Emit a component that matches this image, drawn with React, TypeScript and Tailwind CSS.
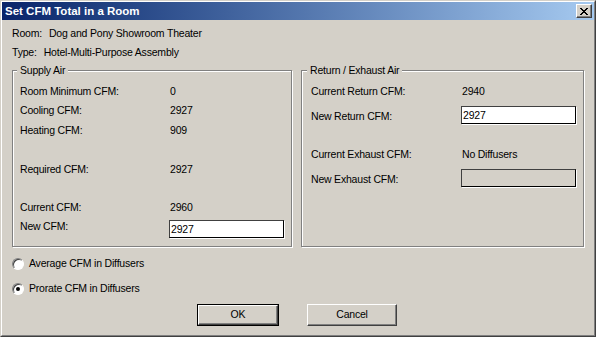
import React, { useState } from "react";

const font = { fontFamily: '"Liberation Sans", Arial, sans-serif' };

const Row: React.FC<{ label: string; value: string; labelW: string; mt: string }> = ({ label, value, labelW, mt }) => (
  <div className={`flex h-[13px] items-center leading-[13px] ${mt}`}>
    <span className={`${labelW} shrink-0`}>{label}</span>
    <span className="pl-[1px]">{value}</span>
  </div>
);

const EditBox: React.FC<{ value?: string; disabled?: boolean }> = ({ value, disabled }) => (
  <div
    className={`flex h-[18px] w-[115px] items-center border border-t-[#404040] border-l-[#404040] border-r-black border-b-black pl-[1px] leading-[13px] shadow-[1px_1px_0_#fff] ${
      disabled ? "bg-[#D4D0C8]" : "bg-white"
    }`}
  >
    {value}
  </div>
);

const Radio: React.FC<{ label: string; checked: boolean; onClick: () => void; mt: string }> = ({ label, checked, onClick, mt }) => (
  <div className={`flex h-[13px] cursor-default items-center leading-[13px] ${mt}`} onClick={onClick}>
    <div className="flex h-[12px] w-[12px] items-center justify-center rounded-full border border-t-[#808080] border-l-[#808080] border-r-white border-b-white bg-white shadow-[inset_1px_1px_0_#404040]">
      {checked && <div className="h-[4px] w-[4px] rounded-full bg-black" />}
    </div>
    <span className="ml-[5px]">{label}</span>
  </div>
);

const GroupBox: React.FC<{ title: string; width: string; legendLeft: string; children: React.ReactNode; className?: string }> = ({
  title,
  width,
  legendLeft,
  children,
  className,
}) => (
  <div className={`relative h-[177px] ${width} border border-[#808080] shadow-[inset_1px_1px_0_#fff,1px_1px_0_#fff] ${className ?? ""}`}>
    <span className={`absolute -top-[7px] ${legendLeft} bg-[#D4D0C8] px-[3px] leading-[13px]`}>{title}</span>
    {children}
  </div>
);

export default function App() {
  const [mode, setMode] = useState<"average" | "prorate">("prorate");

  return (
    <div
      className="h-[337px] w-[596px] border border-t-[#D4D0C8] border-l-[#D4D0C8] border-r-[#404040] border-b-[#404040] bg-[#D4D0C8] text-[10.5px] tracking-[-0.2px] text-black"
      style={font}
    >
      <div className="flex h-full flex-col border border-t-white border-l-white border-r-[#808080] border-b-[#808080]">
        {/* title bar */}
        <div className="flex h-[18px] shrink-0 items-center justify-between bg-gradient-to-r from-[#0A246A] to-[#A6CAF0] pl-[3px] pr-[2px]">
          <span className="text-[11.5px] font-bold leading-[13px] tracking-normal text-white">Set CFM Total in a Room</span>
          <div className="flex h-[14px] w-[16px] items-center justify-center border border-t-white border-l-white border-r-[#404040] border-b-[#404040] bg-[#D4D0C8] shadow-[inset_-1px_-1px_0_#808080]">
            <svg width="8" height="7" viewBox="0 0 8 7" shapeRendering="crispEdges">
              <path d="M0 0h2v1h-2zM6 0h2v1h-2zM1 1h2v1h-2zM5 1h2v1h-2zM2 2h4v1h-4zM3 3h2v1h-2zM2 4h4v1h-4zM1 5h2v1h-2zM5 5h2v1h-2zM0 6h2v1h-2zM6 6h2v1h-2z" fill="#000" />
            </svg>
          </div>
        </div>

        {/* body */}
        <div className="flex flex-col pl-[10px]">
          <div className="mt-[7px] flex h-[13px] items-center leading-[13px]">
            <span>Room:</span>
            <span className="ml-[7px]">Dog and Pony Showroom Theater</span>
          </div>
          <div className="mt-[6px] flex h-[13px] items-center leading-[13px]">
            <span>Type:</span>
            <span className="ml-[7px]">Hotel-Multi-Purpose Assembly</span>
          </div>

          <div className="mt-[11px] flex">
            <GroupBox title="Supply Air" width="w-[280px]" legendLeft="left-[4px]">
              <div className="flex flex-col pl-[7px]">
                <Row label="Room Minimum CFM:" value="0" labelW="w-[149px]" mt="mt-[14px]" />
                <Row label="Cooling CFM:" value="2927" labelW="w-[149px]" mt="mt-[6px]" />
                <Row label="Heating CFM:" value="909" labelW="w-[149px]" mt="mt-[7px]" />
                <Row label="Required CFM:" value="2927" labelW="w-[149px]" mt="mt-[26px]" />
                <Row label="Current CFM:" value="2960" labelW="w-[149px]" mt="mt-[25px]" />
                <div className="mt-[6px] flex items-start">
                  <span className="h-[13px] w-[149px] shrink-0 leading-[13px]">New CFM:</span>
                  <EditBox value="2927" />
                </div>
              </div>
            </GroupBox>

            <GroupBox title="Return / Exhaust Air" width="w-[283px]" legendLeft="left-[5px]" className="ml-[9px]">
              <div className="flex flex-col pl-[9px]">
                <Row label="Current Return CFM:" value="2940" labelW="w-[150px]" mt="mt-[14px]" />
                <div className="mt-[8px] flex items-center">
                  <span className="w-[150px] shrink-0 pt-[2px] leading-[13px]">New Return CFM:</span>
                  <EditBox value="2927" />
                </div>
                <Row label="Current Exhaust CFM:" value="No Diffusers" labelW="w-[150px]" mt="mt-[24px]" />
                <div className="mt-[8px] flex items-center">
                  <span className="w-[150px] shrink-0 pt-[2px] leading-[13px]">New Exhaust CFM:</span>
                  <EditBox disabled />
                </div>
              </div>
            </GroupBox>
          </div>

          <Radio label="Average CFM in Diffusers" checked={mode === "average"} onClick={() => setMode("average")} mt="mt-[10px]" />
          <Radio label="Prorate CFM in Diffusers" checked={mode === "prorate"} onClick={() => setMode("prorate")} mt="mt-[12px]" />

          <div className="mt-[9px] flex pl-[185px]">
            <button className="h-[22px] w-[82px] border border-black bg-[#D4D0C8] p-0">
              <div className="flex h-full w-full items-center justify-center border border-t-white border-l-white border-r-[#404040] border-b-[#404040] shadow-[inset_-1px_-1px_0_#808080]">
                OK
              </div>
            </button>
            <button className="ml-[28px] flex h-[22px] w-[90px] items-center justify-center border border-t-white border-l-white border-r-[#404040] border-b-[#404040] bg-[#D4D0C8] shadow-[inset_-1px_-1px_0_#808080]">
              Cancel
            </button>
          </div>
        </div>
      </div>
    </div>
  );
}
